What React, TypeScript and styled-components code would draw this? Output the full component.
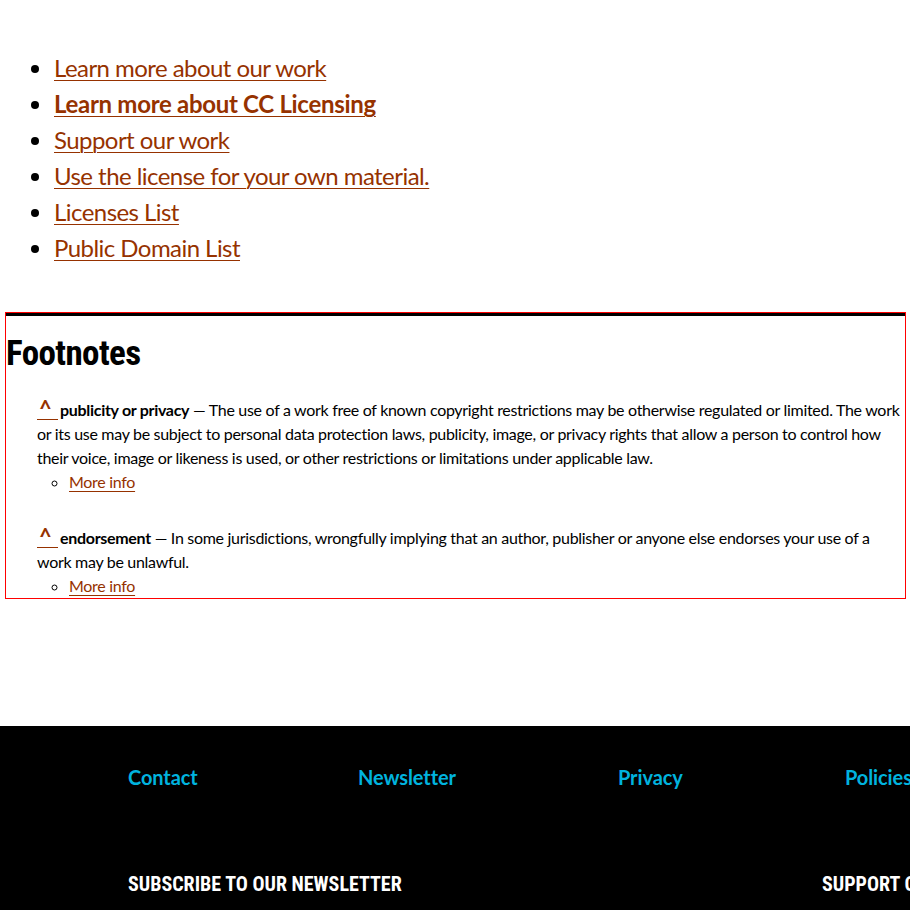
import React from "react";
import styled, { createGlobalStyle } from "styled-components";

const Global = createGlobalStyle`
  html, body { margin: 0; padding: 0; background: #fff; }
  body { font-family: "Source Sans Pro", Lato, "Liberation Sans", sans-serif; color: #000; }
`;

const LINK = "#963200";

const Page = styled.div`
  width: 910px;
  overflow: hidden;
`;

const LinkList = styled.ul`
  margin: 0;
  padding: 50px 0 0 54px;
  font-size: 24px;
  line-height: 36px;
  letter-spacing: -0.55px;
`;

const LinkItem = styled.li<{ $bold?: boolean }>`
  font-weight: ${(p) => (p.$bold ? 700 : 400)};
  letter-spacing: ${(p) => (p.$bold ? "-0.3px" : "inherit")};
`;

const A = styled.a`
  color: ${LINK};
  text-decoration: underline;
  text-decoration-thickness: 1px;
  text-underline-offset: 3px;
`;

const Footnotes = styled.section`
  margin: 47px 5px 0 6px;
  border-top: 3px solid #000;
  outline: 1px solid #f00;
`;

const Heading = styled.h2`
  margin: 0;
  padding-top: 16px;
  font-family: "Roboto Condensed", "Liberation Sans Narrow", Roboto, sans-serif;
  font-weight: 700;
  font-size: 35px;
  line-height: 44px;
  letter-spacing: -0.6px;
`;

const NoteList = styled.ol`
  list-style: none;
  margin: 0;
  padding: 22px 0 0 31px;
  font-size: 16px;
  line-height: 24px;
  letter-spacing: -0.3px;
`;

const Note = styled.li`
  & + & { margin-top: 32px; }
`;

const Back = styled.a`
  display: inline-block;
  box-sizing: border-box;
  width: 21px;
  margin-right: 2px;
  padding-left: 2px;
  vertical-align: top;
  color: ${LINK};
  text-decoration: none;
  border-bottom: 1px solid ${LINK};
  font-weight: 700;
  font-size: 22px;
  line-height: 20px;
  padding-top: 1px;
`;

const Term = styled.b`
  font-weight: 700;
`;

const SubList = styled.ul`
  list-style: circle;
  margin: 0;
  padding-left: 32px;
`;

const Small = styled.a`
  color: ${LINK};
  text-decoration: underline;
  text-decoration-thickness: 1px;
  text-underline-offset: 3px;
`;

const Footer = styled.footer`
  margin-top: 128px;
  background: #000;
  height: 184px;
  padding: 38px 0 0 128px;
  box-sizing: border-box;
  overflow: hidden;
`;

const FooterNav = styled.nav`
  display: grid;
  grid-template-columns: 230px 260px 227px 200px;
  font-size: 20px;
  line-height: 26px;
  font-weight: 700;
  letter-spacing: -0.1px;
`;

const FooterLink = styled.a`
  color: #00b3de;
  text-decoration: none;
  white-space: nowrap;
`;

const FooterRow = styled.div`
  display: grid;
  grid-template-columns: 694px 200px;
  margin-top: 81px;
`;

const FooterTitle = styled.h3`
  margin: 0;
  color: #fff;
  font-family: "Roboto Condensed", "Liberation Sans Narrow", Roboto, sans-serif;
  font-weight: 700;
  font-size: 20px;
  line-height: 26px;
  white-space: nowrap;
  text-transform: uppercase;
`;

export default function App() {
  return (
    <Page>
      <Global />
      <LinkList>
        <LinkItem><A href="#">Learn more about our work</A></LinkItem>
        <LinkItem $bold><A href="#">Learn more about CC Licensing</A></LinkItem>
        <LinkItem><A href="#">Support our work</A></LinkItem>
        <LinkItem><A href="#">Use the license for your own material.</A></LinkItem>
        <LinkItem><A href="#">Licenses List</A></LinkItem>
        <LinkItem><A href="#">Public Domain List</A></LinkItem>
      </LinkList>
      <Footnotes>
        <Heading>Footnotes</Heading>
        <NoteList>
          <Note>
            <Back href="#">^</Back>
            <Term>publicity or privacy</Term> — The use of a work free of known copyright restrictions may be otherwise regulated or limited. The work or its use may be subject to personal data protection laws, publicity, image, or privacy rights that allow a person to control how their voice, image or likeness is used, or other restrictions or limitations under applicable law.
            <SubList>
              <li><Small href="#">More info</Small></li>
            </SubList>
          </Note>
          <Note>
            <Back href="#">^</Back>
            <Term>endorsement</Term> — In some jurisdictions, wrongfully implying that an author, publisher or anyone else endorses your use of a work may be unlawful.
            <SubList>
              <li><Small href="#">More info</Small></li>
            </SubList>
          </Note>
        </NoteList>
      </Footnotes>
      <Footer>
        <FooterNav>
          <FooterLink href="#">Contact</FooterLink>
          <FooterLink href="#">Newsletter</FooterLink>
          <FooterLink href="#">Privacy</FooterLink>
          <FooterLink href="#">Policies</FooterLink>
        </FooterNav>
        <FooterRow>
          <FooterTitle>Subscribe to our Newsletter</FooterTitle>
          <FooterTitle>Support our work</FooterTitle>
        </FooterRow>
      </Footer>
    </Page>
  );
}
